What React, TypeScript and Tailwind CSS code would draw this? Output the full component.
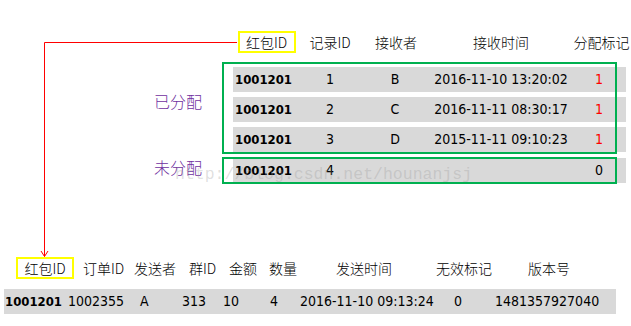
const dataFont = "font-['DejaVu_Sans_Condensed','Liberation_Sans','Noto_Sans_CJK_SC',sans-serif]";
const headFont = "font-['Noto_Sans_CJK_SC',sans-serif] font-light";

const assigned = [
  { rec: "1", to: "B", time: "2016-11-10 13:20:02", flag: "1" },
  { rec: "2", to: "C", time: "2016-11-11 08:30:17", flag: "1" },
  { rec: "3", to: "D", time: "2015-11-11 09:10:23", flag: "1" },
];

function YellowBox({ children }: { children: React.ReactNode }) {
  return (
    <div className="flex h-[22px] w-[58px] items-center justify-center border-2 border-[#ffff00] text-[14px] leading-none">
      {children}
    </div>
  );
}

function RecordRow({ rec, to, time, flag, flagRed }: { rec: string; to: string; time: string; flag: string; flagRed?: boolean }) {
  return (
    <div className={`grid h-[25px] w-[393px] grid-cols-[67px_60px_70px_142px_54px] items-center bg-[#d9d9d9] text-[14px] text-black ${dataFont}`}>
      <span className="pl-[2px] text-[13px] font-bold">1001201</span>
      <span className="text-center">{rec}</span>
      <span className="text-center">{to}</span>
      <span className="text-center">{time}</span>
      <span className={`text-center ${flagRed ? "text-[#ff0000]" : ""}`}>{flag}</span>
    </div>
  );
}

export default function App() {
  return (
    <div className="relative h-[326px] w-[631px] overflow-hidden bg-white text-black">
      {/* 红包-记录 header */}
      <div className={`grid h-[22px] translate-y-[31px] grid-cols-[233px_67px_60px_70px_142px_59px] items-center text-[14px] ${headFont}`}>
        <div />
        <div className="flex justify-center">
          <YellowBox>红包ID</YellowBox>
        </div>
        <span className="text-center">记录ID</span>
        <span className="pl-[2px] text-center">接收者</span>
        <span className="text-center">接收时间</span>
        <span className="whitespace-nowrap text-center">分配标记</span>
      </div>

      <div className="mt-[40px] flex flex-col gap-[3px]">
        <div className="flex">
          <div className={`w-[222px] pr-[20px] pt-[29px] text-right text-[16px] leading-[20px] text-[#7030a0] ${headFont}`}>已分配</div>
          <div className="relative flex w-[395px] flex-col gap-[5px] pb-[2px] pl-[11px] pt-[5px] after:absolute after:inset-0 after:border-2 after:border-[#00b050]">
            {assigned.map((r) => (
              <RecordRow key={r.rec} rec={r.rec} to={r.to} time={r.time} flag={r.flag} flagRed />
            ))}
          </div>
        </div>
        <div className="flex">
          <div className={`w-[222px] pr-[20px] text-right text-[16px] leading-[20px] text-[#7030a0] ${headFont}`}>未分配</div>
          <div className="relative w-[395px] py-[1px] pl-[11px] after:absolute after:inset-0 after:border-2 after:border-[#00b050]">
            <RecordRow rec="4" to="" time="" flag="0" />
          </div>
        </div>
      </div>

      {/* 订单 header */}
      <div className={`mt-[73px] flex h-[22px] items-center pl-[16px] text-[14px] ${headFont}`}>
        <div className="w-[67px]">
          <YellowBox>红包ID</YellowBox>
        </div>
        <span className="w-[51px]">订单ID</span>
        <span className="w-[55px]">发送者</span>
        <span className="w-[40px]">群ID</span>
        <span className="w-[40px]">金额</span>
        <span className="w-[67px]">数量</span>
        <span className="w-[100px]">发送时间</span>
        <span className="w-[92px]">无效标记</span>
        <span>版本号</span>
      </div>

      <div className={`ml-[4px] mt-[10px] flex h-[25px] w-[612px] items-center bg-[#d9d9d9] pl-[1px] text-[14px] ${dataFont}`}>
        <span className="w-[63px] text-[13px] font-bold">1001201</span>
        <span className="w-[72px]">1002355</span>
        <span className="w-[42px]">A</span>
        <span className="w-[41px]">313</span>
        <span className="w-[47px]">10</span>
        <span className="w-[30px]">4</span>
        <span className="w-[154px]">2016-11-10 09:13:24</span>
        <span className="w-[41px]">0</span>
        <span>1481357927040</span>
      </div>

      {/* connector */}
      <svg className="pointer-events-none absolute left-0 top-0" width="631" height="326">
        <path d="M44.5 42.5 H237 M44.5 42.5 V256.5" stroke="#ff0000" strokeWidth="1" fill="none" />
        <path d="M41 251 L44.5 256.5 L48 251" stroke="#ff0000" strokeWidth="1" fill="none" />
      </svg>

      {/* watermark */}
      <div className="pointer-events-none absolute left-[175px] top-[165px] font-['Liberation_Mono',monospace] text-[16.5px] leading-[20px] text-[#969696]/30">
        http://blog.csdn.net/hounanjsj
      </div>
    </div>
  );
}
